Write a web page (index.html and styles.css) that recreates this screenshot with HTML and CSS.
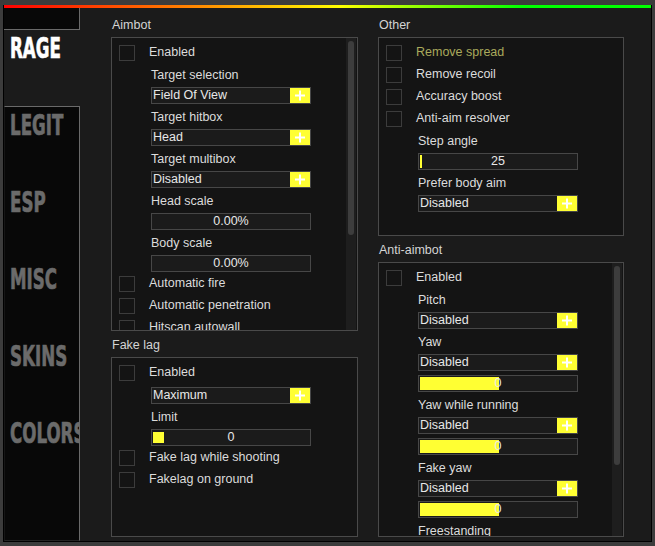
FILE: index.html
```html
<!DOCTYPE html>
<html>
<head>
<meta charset="utf-8">
<link rel="stylesheet" href="styles.css">
</head>
<body>
<div class="window">
  <div class="topbar"></div>
  <div class="frame">
    <nav class="sidebar">
      <div class="cap"></div>
      <div class="tab active"><span class="tt">RAGE</span></div>
      <div class="rest">
        <div class="tab"><span class="tt">LEGIT</span></div>
        <div class="tab"><span class="tt">ESP</span></div>
        <div class="tab"><span class="tt">MISC</span></div>
        <div class="tab"><span class="tt">SKINS</span></div>
        <div class="tab"><span class="tt">COLORS</span></div>
      </div>
    </nav>
    <main class="main">
      <section class="col col1">
        <div class="gtitle">Aimbot</div>
        <div class="box box-aimbot">
          <div class="check"><span class="cb"></span><span class="ct">Enabled</span></div>
          <div class="lbl">Target selection</div>
          <div class="combo"><span class="cv">Field Of View</span><span class="btn"><svg width="20" height="15" viewBox="0 0 20 15"><rect x="5" y="6.5" width="10" height="2" fill="#fff"/><rect x="9" y="2.5" width="2" height="10" fill="#fff"/></svg></span></div>
          <div class="lbl">Target hitbox</div>
          <div class="combo"><span class="cv">Head</span><span class="btn"><svg width="20" height="15" viewBox="0 0 20 15"><rect x="5" y="6.5" width="10" height="2" fill="#fff"/><rect x="9" y="2.5" width="2" height="10" fill="#fff"/></svg></span></div>
          <div class="lbl">Target multibox</div>
          <div class="combo"><span class="cv">Disabled</span><span class="btn"><svg width="20" height="15" viewBox="0 0 20 15"><rect x="5" y="6.5" width="10" height="2" fill="#fff"/><rect x="9" y="2.5" width="2" height="10" fill="#fff"/></svg></span></div>
          <div class="lbl">Head scale</div>
          <div class="slider"><span class="sv">0.00%</span></div>
          <div class="lbl">Body scale</div>
          <div class="slider"><span class="sv">0.00%</span></div>
          <div class="check"><span class="cb"></span><span class="ct">Automatic fire</span></div>
          <div class="check"><span class="cb"></span><span class="ct">Automatic penetration</span></div>
          <div class="check"><span class="cb"></span><span class="ct">Hitscan autowall</span></div>
          <div class="scroll"><span class="thumb thumb-aimbot"></span></div>
        </div>
        <div class="gtitle">Fake lag</div>
        <div class="box box-fakelag">
          <div class="check"><span class="cb"></span><span class="ct">Enabled</span></div>
          <div class="combo"><span class="cv">Maximum</span><span class="btn"><svg width="20" height="15" viewBox="0 0 20 15"><rect x="5" y="6.5" width="10" height="2" fill="#fff"/><rect x="9" y="2.5" width="2" height="10" fill="#fff"/></svg></span></div>
          <div class="lbl">Limit</div>
          <div class="slider"><span class="fill fill-square"></span><span class="sv">0</span></div>
          <div class="check"><span class="cb"></span><span class="ct">Fake lag while shooting</span></div>
          <div class="check"><span class="cb"></span><span class="ct">Fakelag on ground</span></div>
        </div>
      </section>
      <section class="col col2">
        <div class="gtitle">Other</div>
        <div class="box box-other">
          <div class="check"><span class="cb"></span><span class="ct hover">Remove spread</span></div>
          <div class="check"><span class="cb"></span><span class="ct">Remove recoil</span></div>
          <div class="check"><span class="cb"></span><span class="ct">Accuracy boost</span></div>
          <div class="check"><span class="cb"></span><span class="ct">Anti-aim resolver</span></div>
          <div class="lbl">Step angle</div>
          <div class="slider"><span class="fill" style="width:2px"></span><span class="sv">25</span></div>
          <div class="lbl">Prefer body aim</div>
          <div class="combo"><span class="cv">Disabled</span><span class="btn"><svg width="20" height="15" viewBox="0 0 20 15"><rect x="5" y="6.5" width="10" height="2" fill="#fff"/><rect x="9" y="2.5" width="2" height="10" fill="#fff"/></svg></span></div>
        </div>
        <div class="gtitle">Anti-aimbot</div>
        <div class="box box-antiaim">
          <div class="check"><span class="cb"></span><span class="ct">Enabled</span></div>
          <div class="lbl">Pitch</div>
          <div class="combo"><span class="cv">Disabled</span><span class="btn"><svg width="20" height="15" viewBox="0 0 20 15"><rect x="5" y="6.5" width="10" height="2" fill="#fff"/><rect x="9" y="2.5" width="2" height="10" fill="#fff"/></svg></span></div>
          <div class="lbl">Yaw</div>
          <div class="combo"><span class="cv">Disabled</span><span class="btn"><svg width="20" height="15" viewBox="0 0 20 15"><rect x="5" y="6.5" width="10" height="2" fill="#fff"/><rect x="9" y="2.5" width="2" height="10" fill="#fff"/></svg></span></div>
          <div class="slider"><span class="fill" style="width:79px"></span><span class="sv">0</span></div>
          <div class="lbl">Yaw while running</div>
          <div class="combo"><span class="cv">Disabled</span><span class="btn"><svg width="20" height="15" viewBox="0 0 20 15"><rect x="5" y="6.5" width="10" height="2" fill="#fff"/><rect x="9" y="2.5" width="2" height="10" fill="#fff"/></svg></span></div>
          <div class="slider"><span class="fill" style="width:79px"></span><span class="sv">0</span></div>
          <div class="lbl">Fake yaw</div>
          <div class="combo"><span class="cv">Disabled</span><span class="btn"><svg width="20" height="15" viewBox="0 0 20 15"><rect x="5" y="6.5" width="10" height="2" fill="#fff"/><rect x="9" y="2.5" width="2" height="10" fill="#fff"/></svg></span></div>
          <div class="slider"><span class="fill" style="width:79px"></span><span class="sv">0</span></div>
          <div class="lbl">Freestanding</div>
          <div class="combo"><span class="cv">Disabled</span><span class="btn"><svg width="20" height="15" viewBox="0 0 20 15"><rect x="5" y="6.5" width="10" height="2" fill="#fff"/><rect x="9" y="2.5" width="2" height="10" fill="#fff"/></svg></span></div>
          <div class="scroll"><span class="thumb thumb-antiaim"></span></div>
        </div>
      </section>
    </main>
  </div>
</div>
</body>
</html>
```
FILE: styles.css
```css
* { box-sizing: border-box; }
html, body { margin: 0; padding: 0; }
body {
  width: 655px;
  height: 546px;
  overflow: hidden;
  background: #3c3c3c;
  font-family: "Liberation Sans", Arial, sans-serif;
  font-size: 12.5px;
  color: #dcdcdc;
}
.window {
  margin: 5px 3px 0 3px;
  height: 537px;
  border: 1px solid #000;
  border-top: 0;
  background: #1b1b1b;
  display: flex;
  flex-direction: column;
}
.topbar {
  height: 3px;
  flex: none;
  background: linear-gradient(to right, #ff0000 0%, #ff8a00 30%, #ffff00 52%, #00ff00 80%, #00ff00 100%);
}
.frame {
  flex: 1;
  display: flex;
  min-height: 0;
}
.sidebar {
  width: 76px;
  flex: none;
  display: flex;
  flex-direction: column;
}
.cap {
  height: 22px;
  flex: none;
  background: #080808;
  border-right: 1px solid #6a6a6a;
  border-bottom: 1px solid #6a6a6a;
}
.rest {
  flex: 1;
  background: #080808;
  border-top: 1px solid #6a6a6a;
  border-right: 1px solid #6a6a6a;
  border-bottom: 1px solid #232323;
  border-left: 1px solid #161616;
}
.tab {
  height: 77px;
  padding: 4px 0 0 5px;
  overflow: hidden;
  white-space: nowrap;
}
.tab.active {
  height: 76px;
  padding-left: 6px;
}
.tt {
  display: inline-block;
  font-family: "DejaVu Sans", sans-serif;
  font-stretch: condensed;
  font-weight: bold;
  font-size: 29px;
  line-height: 29px;
  color: #6b6b6b;
  transform: scaleX(0.64);
  transform-origin: 0 0;
  -webkit-text-stroke: 0.7px currentColor;
}
.tab.active .tt { color: #ffffff; }

.main {
  flex: 1;
  display: flex;
  gap: 20px;
  padding: 8px 0 0 31px;
}
.col1 { width: 247px; }
.col2 { width: 246px; }
.gtitle {
  height: 18px;
  line-height: 18px;
  margin-bottom: 3px;
  padding-left: 1px;
  color: #d4d4d4;
  white-space: nowrap;
}
.box {
  position: relative;
  overflow: hidden;
  border: 1px solid #4a4a4a;
  background: #141414;
  padding: 7px 0 0 7px;
  margin-bottom: 5px;
}
.box-aimbot { height: 294px; }
.box-fakelag { height: 180px; }
.box-other { height: 199px; }
.box-antiaim { height: 275px; }

.check {
  display: flex;
  align-items: flex-start;
  height: 16px;
  margin-bottom: 6px;
  white-space: nowrap;
}
.cb {
  width: 16px;
  height: 16px;
  flex: none;
  border: 1px solid #3c3c3c;
  background: #141414;
}
.ct {
  margin-left: 14px;
  line-height: 13px;
  padding-top: 1px;
  color: #dcdcdc;
}
.ct.hover { color: #aaaa5c; }

.lbl {
  margin-left: 32px;
  height: 18px;
  line-height: 18px;
  margin-bottom: 3px;
  white-space: nowrap;
  color: #dcdcdc;
}
.check + .lbl { margin-top: -1px; }

.combo, .slider {
  margin-left: 32px;
  width: 160px;
  height: 17px;
  margin-bottom: 4px;
  border: 1px solid #474747;
  background: #1b1b1b;
}
.combo {
  display: flex;
}
.cv {
  flex: 1;
  padding-left: 1px;
  line-height: 15px;
  color: #e8e8e8;
  white-space: nowrap;
  overflow: hidden;
}
.btn {
  width: 20px;
  height: 15px;
  flex: none;
  background: #ffff33;
}
.btn svg { display: block; }
.combo + .slider { margin-top: 1px; }
.slider + .check { margin-top: 1px; }

.slider {
  position: relative;
  text-align: center;
}
.sv {
  position: relative;
  line-height: 15px;
  color: #e8e8e8;
}
.fill {
  position: absolute;
  left: 1px;
  top: 1px;
  height: 13px;
  background: #ffff33;
}
.fill-square {
  width: 11px;
  top: 2px;
  height: 11px;
}

.scroll {
  position: absolute;
  top: 0;
  right: 1px;
  bottom: 0;
  width: 10px;
  background: #1e1e1e;
}
.thumb {
  position: absolute;
  left: 2px;
  width: 6px;
  top: 3px;
  border-radius: 3px;
  background: #3d3d3d;
}
.thumb-aimbot { height: 194px; }
.thumb-antiaim { height: 199px; }
```
